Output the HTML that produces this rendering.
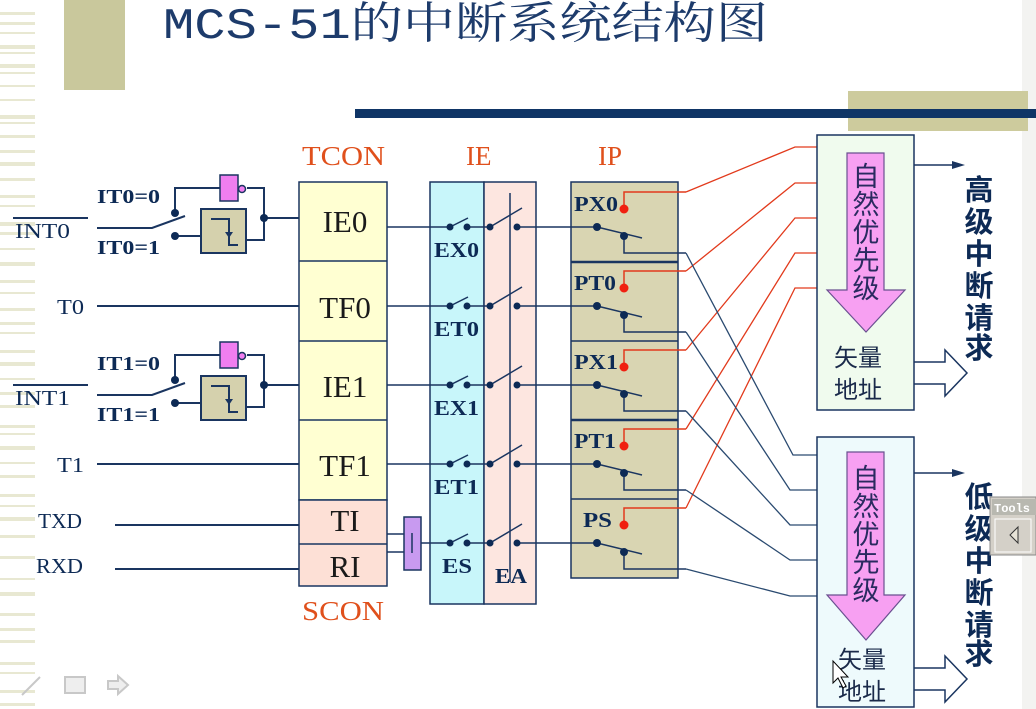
<!DOCTYPE html>
<html><head><meta charset="utf-8"><style>
html,body{margin:0;padding:0;background:#fff;width:1036px;height:709px;overflow:hidden}
svg{display:block}
.lab{font-family:"Liberation Serif","Noto Serif CJK SC",serif;fill:#0d2a55}
.bold{font-weight:bold}
.org{font-family:"Liberation Serif",serif;fill:#e0501c;font-size:27px}
.reg{font-family:"Liberation Serif",serif;fill:#1a1a1a;font-size:31px}
.cjk{font-family:"Liberation Sans","Noto Sans CJK SC",sans-serif}
</style></head><body>
<svg width="1036" height="709" viewBox="0 0 1036 709" xmlns="http://www.w3.org/2000/svg">
<g fill="#e8e8d2">
<rect x="0" y="12" width="35" height="3"/><rect x="0" y="22" width="35" height="3"/><rect x="0" y="32" width="35" height="2"/>
<rect x="0" y="45" width="35" height="4"/><rect x="0" y="52" width="35" height="2"/><rect x="0" y="64" width="35" height="4"/>
<rect x="0" y="72" width="35" height="2"/><rect x="0" y="85" width="35" height="2"/><rect x="0" y="99" width="35" height="2"/>
<rect x="0" y="115" width="35" height="4"/><rect x="0" y="122" width="35" height="2"/><rect x="0" y="135" width="35" height="3"/>
<rect x="0" y="150" width="35" height="3"/><rect x="0" y="162" width="35" height="4"/><rect x="0" y="178" width="35" height="3"/>
<rect x="0" y="195" width="35" height="3"/><rect x="0" y="205" width="35" height="2"/><rect x="0" y="222" width="35" height="4"/>
<rect x="0" y="232" width="35" height="3"/><rect x="0" y="248" width="35" height="2"/><rect x="0" y="262" width="35" height="4"/>
<rect x="0" y="280" width="35" height="3"/><rect x="0" y="292" width="35" height="2"/><rect x="0" y="308" width="35" height="3"/>
<rect x="0" y="322" width="35" height="3"/><rect x="0" y="332" width="35" height="2"/><rect x="0" y="350" width="35" height="3"/>
<rect x="0" y="362" width="35" height="4"/><rect x="0" y="378" width="35" height="2"/><rect x="0" y="392" width="35" height="3"/>
<rect x="0" y="405" width="35" height="3"/><rect x="0" y="425" width="35" height="3"/><rect x="0" y="433" width="35" height="2"/>
<rect x="0" y="446" width="35" height="4"/><rect x="0" y="462" width="35" height="2"/><rect x="0" y="475" width="35" height="3"/>
<rect x="0" y="494" width="35" height="3"/><rect x="0" y="505" width="35" height="2"/><rect x="0" y="517" width="35" height="4"/>
<rect x="0" y="535" width="35" height="3"/><rect x="0" y="556" width="35" height="3"/><rect x="0" y="578" width="35" height="2"/>
<rect x="0" y="592" width="35" height="4"/><rect x="0" y="613" width="35" height="3"/><rect x="0" y="628" width="35" height="3"/>
<rect x="0" y="640" width="35" height="3"/><rect x="0" y="662" width="35" height="3"/><rect x="0" y="672" width="35" height="2"/>
<rect x="0" y="690" width="35" height="3"/><rect x="0" y="703" width="35" height="3"/>
</g>
<rect x="1022" y="0" width="14" height="709" fill="#f3f3f1"/>
<rect x="64" y="0" width="61" height="90" fill="#c9c89c"/>
<rect x="848" y="91" width="180" height="40" fill="#cdcb9d"/>
<rect x="355" y="109" width="681" height="9" fill="#0f3566"/>
<text x="163" y="38" textLength="605" lengthAdjust="spacingAndGlyphs" style="font-family:'Liberation Mono','Noto Serif CJK SC',serif;font-size:44px;fill:#1d3b6b">MCS-51的中断系统结构图</text>

<text class="org" x="302" y="165" textLength="83" lengthAdjust="spacingAndGlyphs">TCON</text>
<text class="org" x="466" y="165">IE</text>
<text class="org" x="598" y="165">IP</text>
<text class="org" x="302" y="620" textLength="82" lengthAdjust="spacingAndGlyphs">SCON</text>

<g stroke="#1a3560" stroke-width="1.5">
<rect x="299" y="182" width="88" height="318" fill="#ffffd2"/>
<rect x="299" y="500" width="88" height="86" fill="#fde0d6"/>
<line x1="299" y1="261" x2="387" y2="261"/><line x1="299" y1="341" x2="387" y2="341"/>
<line x1="299" y1="420" x2="387" y2="420"/><line x1="299" y1="544" x2="387" y2="544"/>
<rect x="430" y="182" width="54" height="422" fill="#c8f6fa"/>
<rect x="484" y="182" width="52" height="422" fill="#fde6e0"/>
<rect x="571" y="182" width="107" height="396" fill="#d9d5b2"/>
<line x1="571" y1="262" x2="678" y2="262" stroke-width="2.5"/><line x1="571" y1="341" x2="678" y2="341"/>
<line x1="571" y1="420" x2="678" y2="420" stroke-width="2.5"/><line x1="571" y1="499" x2="678" y2="499"/>
</g>
<g class="reg" text-anchor="middle">
<text x="345" y="232">IE0</text><text x="345" y="318">TF0</text><text x="345" y="397">IE1</text>
<text x="345" y="476">TF1</text><text x="345" y="531">TI</text><text x="345" y="577">RI</text>
</g>

<g class="lab" font-size="21">
<text x="15" y="238" textLength="55" lengthAdjust="spacingAndGlyphs">INT0</text><text x="15" y="405" textLength="55" lengthAdjust="spacingAndGlyphs">INT1</text>
<text x="57" y="314" textLength="27" lengthAdjust="spacingAndGlyphs">T0</text><text x="57" y="472" textLength="27" lengthAdjust="spacingAndGlyphs">T1</text>
<text x="38" y="528" textLength="44" lengthAdjust="spacingAndGlyphs">TXD</text><text x="36" y="573" textLength="47" lengthAdjust="spacingAndGlyphs">RXD</text>
</g>
<g class="lab bold" font-size="20">
<text x="97" y="203" textLength="63" lengthAdjust="spacingAndGlyphs">IT0=0</text><text x="97" y="254" textLength="63" lengthAdjust="spacingAndGlyphs">IT0=1</text>
<text x="97" y="370" textLength="63" lengthAdjust="spacingAndGlyphs">IT1=0</text><text x="97" y="421" textLength="63" lengthAdjust="spacingAndGlyphs">IT1=1</text>
</g>
<g stroke="#1a3560" stroke-width="2" fill="none">
<line x1="13" y1="218" x2="88" y2="218"/><line x1="13" y1="385" x2="88" y2="385"/>
<line x1="97" y1="306" x2="299" y2="306"/><line x1="97" y1="464" x2="299" y2="464"/>
<line x1="115" y1="525" x2="299" y2="525"/><line x1="115" y1="569" x2="299" y2="569"/>
</g>
<g id="int0">
<g stroke="#1a3560" stroke-width="2" fill="none">
<polyline points="97,228 152,228 185,216"/>
<polyline points="175,213 175,188 220,188"/>
<polyline points="247,188 264,188 264,240 246,240"/>
<line x1="175" y1="236" x2="201" y2="236"/>
<line x1="264" y1="218" x2="299" y2="218"/>
</g>
<rect x="220" y="175" width="18" height="26" fill="#f07ef0" stroke="#1a3560" stroke-width="1.5"/>
<circle cx="242" cy="189" r="3.5" fill="#f07ef0" stroke="#1a3560" stroke-width="1.5"/>
<rect x="201" y="209" width="45" height="44" fill="#d5d1ad" stroke="#1a3560" stroke-width="2"/>
<polyline points="211,219 229,219 229,245 238,245" fill="none" stroke="#1a3560" stroke-width="2"/>
<path d="M225,232 L233,232 L229,238 Z" fill="#1a3560"/>
<g fill="#0d2a55"><circle cx="175" cy="213" r="4"/><circle cx="175" cy="236" r="4"/><circle cx="264" cy="218" r="4"/></g>
</g>
<use href="#int0" transform="translate(0,167)"/>

<g stroke="#1a3560" stroke-width="1.5" fill="none">
<line x1="387" y1="227" x2="450" y2="227"/><line x1="387" y1="306" x2="450" y2="306"/>
<line x1="387" y1="385" x2="450" y2="385"/><line x1="387" y1="464" x2="450" y2="464"/>
<line x1="387" y1="534" x2="404" y2="534"/><line x1="387" y1="552" x2="404" y2="552"/>
<line x1="421" y1="543" x2="450" y2="543"/>
<line x1="510" y1="193" x2="510" y2="582"/>
</g>
<rect x="404" y="517" width="17" height="53" fill="#c89af0" stroke="#1a3560" stroke-width="1.5"/>
<line x1="412" y1="533" x2="412" y2="553" stroke="#1a3560" stroke-width="1.5"/>

<g id="sw">
<g stroke="#1a3560" stroke-width="1.5" fill="none">
<line x1="450" y1="227" x2="468" y2="218"/>
<line x1="467" y1="227" x2="490" y2="227"/>
<line x1="490" y1="227" x2="522" y2="208"/>
<line x1="517" y1="227" x2="597" y2="227"/>
<line x1="597" y1="227" x2="642" y2="238"/>
<polyline points="624,236 624,253 686,253"/>
</g>
<g fill="#0d2a55"><circle cx="450" cy="227" r="3.5"/><circle cx="467" cy="227" r="3.5"/><circle cx="490" cy="227" r="3.5"/><circle cx="517" cy="227" r="3.5"/><circle cx="597" cy="227" r="4"/><circle cx="624" cy="236" r="4"/></g>
<polyline points="624,209 624,192 686,192" fill="none" stroke="#e23a1c" stroke-width="1.5"/>
<circle cx="624" cy="209" r="4.5" fill="#f02010"/>
</g>
<use href="#sw" transform="translate(0,79)"/>
<use href="#sw" transform="translate(0,158)"/>
<use href="#sw" transform="translate(0,237)"/>
<use href="#sw" transform="translate(0,316)"/>

<g class="lab bold" font-size="21">
<text x="434" y="257" textLength="45" lengthAdjust="spacingAndGlyphs">EX0</text><text x="434" y="336" textLength="45" lengthAdjust="spacingAndGlyphs">ET0</text><text x="434" y="415" textLength="45" lengthAdjust="spacingAndGlyphs">EX1</text>
<text x="434" y="494" textLength="45" lengthAdjust="spacingAndGlyphs">ET1</text><text x="442" y="573" textLength="30" lengthAdjust="spacingAndGlyphs">ES</text><text x="495" y="583" textLength="32" lengthAdjust="spacingAndGlyphs">EA</text>
<text x="574" y="211" textLength="44" lengthAdjust="spacingAndGlyphs">PX0</text><text x="574" y="290" textLength="42" lengthAdjust="spacingAndGlyphs">PT0</text><text x="574" y="369" textLength="44" lengthAdjust="spacingAndGlyphs">PX1</text>
<text x="574" y="448" textLength="42" lengthAdjust="spacingAndGlyphs">PT1</text><text x="583" y="527" textLength="29" lengthAdjust="spacingAndGlyphs">PS</text>
</g>

<g stroke="#e23a1c" stroke-width="1.3" fill="none">
<polyline points="686,192 795,147 817,147"/>
<polyline points="686,271 795,183 817,183"/>
<polyline points="686,350 795,218 817,218"/>
<polyline points="686,429 795,253 817,253"/>
<polyline points="686,508 795,288 817,288"/>
</g>
<g stroke="#2a4a70" stroke-width="1.3" fill="none">
<polyline points="686,253 793,455 817,455"/>
<polyline points="686,332 790,490 817,490"/>
<polyline points="686,411 790,525 817,525"/>
<polyline points="686,490 790,560 817,560"/>
<polyline points="686,569 790,596 817,596"/>
</g>

<g>
<rect x="817" y="135" width="97" height="275" fill="#f0fbee" stroke="#1a3560" stroke-width="1.5"/>
<path d="M847,153 L884,153 L884,290 L905,290 L866,332 L827,290 L847,290 Z" fill="#f7a0f2" stroke="#6a5090" stroke-width="1.2"/>
<g class="cjk" font-size="27" fill="#2a2a60" text-anchor="middle">
<text x="866" y="186">自</text><text x="866" y="214">然</text><text x="866" y="242">优</text><text x="866" y="270">先</text><text x="866" y="298">级</text>
</g>
<g class="cjk" font-size="24" fill="#1a2a4a">
<text x="834" y="366">矢量</text><text x="834" y="398">地址</text>
</g>
<g stroke="#1a3560" stroke-width="1.5" fill="none">
<line x1="914" y1="165" x2="955" y2="165"/>
<polyline points="914,362 945,362 945,350 967,373 945,396 945,384 914,384"/>
</g>
<path d="M952,161 L965,165 L952,169 Z" fill="#1a3560"/>
</g>
<g transform="translate(0,302)">
<rect x="817" y="135" width="97" height="270" fill="#eefafc" stroke="#1a3560" stroke-width="1.5"/>
<path d="M847,150 L884,150 L884,293 L905,293 L866,338 L827,293 L847,293 Z" fill="#f7a0f2" stroke="#6a5090" stroke-width="1.2"/>
<g class="cjk" font-size="27" fill="#2a2a60" text-anchor="middle">
<text x="866" y="186">自</text><text x="866" y="214">然</text><text x="866" y="242">优</text><text x="866" y="270">先</text><text x="866" y="298">级</text>
</g>
<g class="cjk" font-size="24" fill="#1a2a4a">
<text x="838" y="366">矢量</text><text x="838" y="398">地址</text>
</g>
<g stroke="#1a3560" stroke-width="1.5" fill="none">
<line x1="914" y1="171" x2="955" y2="171"/>
<polyline points="914,366 945,366 945,354 967,377 945,400 945,388 914,388"/>
</g>
<path d="M952,167 L965,171 L952,175 Z" fill="#1a3560"/>
</g>

<g class="cjk" font-size="29" fill="#0d2a55" font-weight="bold" text-anchor="middle">
<text x="979" y="200">高</text><text x="979" y="232">级</text><text x="979" y="264">中</text><text x="979" y="296">断</text><text x="979" y="328">请</text><text x="979" y="358">求</text>
<text x="979" y="507">低</text><text x="979" y="539">级</text><text x="979" y="571">中</text><text x="979" y="603">断</text><text x="979" y="635">请</text><text x="979" y="664">求</text>
</g>

<rect x="990" y="497" width="46" height="58" fill="#d4d0c8" stroke="#888" stroke-width="1"/>
<rect x="992" y="499" width="44" height="16" fill="#b8b8b0"/>
<text x="994" y="512" font-family="Liberation Mono,monospace" font-size="12" font-weight="bold" fill="#fff">Tools</text>
<rect x="995" y="519" width="36" height="33" fill="#d4d0c8" stroke="#fff" stroke-width="1"/>
<path d="M1018,527 L1010,535 L1018,543 Z" fill="#e8e4d8" stroke="#333"/>

<path d="M833,661 L833,683 L838,678 L843,688 L846,686 L841,677 L848,677 Z" fill="#fff" stroke="#000" stroke-width="1"/>

<g stroke="#c8c8c8" stroke-width="2" fill="none">
<line x1="22" y1="695" x2="40" y2="677"/>
<rect x="65" y="677" width="20" height="16" fill="#eee"/>
<path d="M108,681 L118,681 L118,676 L128,685 L118,694 L118,689 L108,689 Z" fill="#eee"/>
</g>
</svg>
</body></html>
